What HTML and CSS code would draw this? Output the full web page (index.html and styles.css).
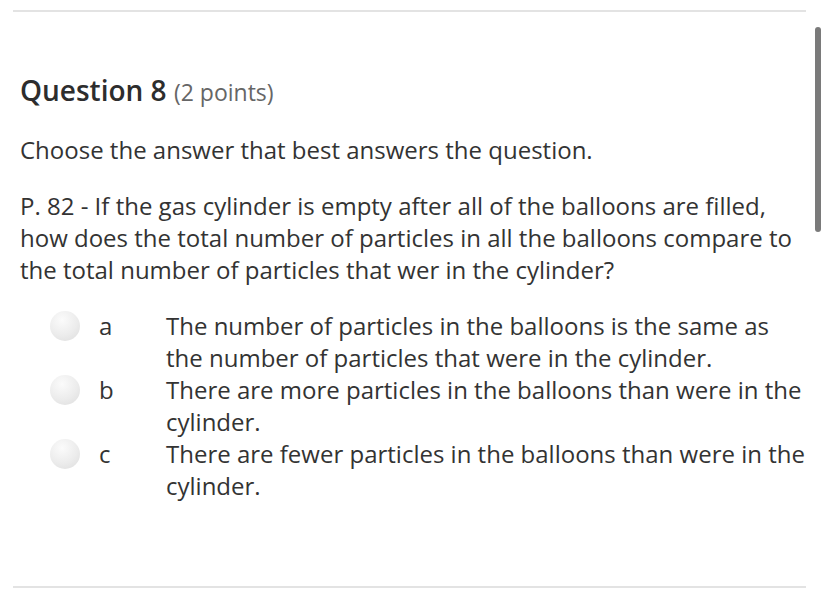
FILE: index.html
```html
<!DOCTYPE html>
<html>
<head>
<meta charset="utf-8">
<link rel="stylesheet" href="styles.css">
</head>
<body>
<div class="page">
  <div class="rule"></div>
  <div class="question">
    <h2 class="title">Question 8 <span class="points">(2 points)</span></h2>
    <p class="text first">Choose the answer that best answers the question.</p>
    <p class="text">P. 82 - If the gas cylinder is empty after all of the balloons are filled, how does the total number of particles in all the balloons compare to the total number of particles that wer in the cylinder?</p>
    <div class="options">
      <div class="option">
        <span class="radio"></span>
        <span class="letter">a</span>
        <span class="answer">The number of particles in the balloons is the same as the number of particles that were in the cylinder.</span>
      </div>
      <div class="option">
        <span class="radio"></span>
        <span class="letter">b</span>
        <span class="answer">There are more particles in the balloons than were in the cylinder.</span>
      </div>
      <div class="option">
        <span class="radio"></span>
        <span class="letter">c</span>
        <span class="answer">There are fewer particles in the balloons than were in the cylinder.</span>
      </div>
    </div>
  </div>
  <div class="rule bottom"></div>
</div>
<div class="scrollbar"></div>
</body>
</html>
```
FILE: styles.css
```css
html, body {
  margin: 0;
  padding: 0;
  background: #fff;
}
body {
  font-family: "Open Sans", "Liberation Sans", sans-serif;
  color: #333;
  width: 826px;
  height: 598px;
  overflow: hidden;
  position: relative;
}
.page {
  padding: 10px 20px 0 13px;
}
.rule {
  height: 2px;
  background: #e3e3e3;
  width: 793px;
}
.rule.bottom {
  margin-top: 84px;
}
.question {
  padding-left: 7px;
  padding-top: 60px;
}
.title {
  margin: 0;
  font-size: 28px;
  font-weight: 600;
  line-height: 36px;
  color: #2d2d2d;
}
.points {
  font-size: 23px;
  font-weight: 400;
  color: #666;
}
.text {
  margin: 24px 0 0;
  font-size: 24px;
  line-height: 32px;
  width: 786px;
}
.text.first {
  margin-top: 24px;
}
.options {
  margin-top: 24px;
  display: flex;
  flex-direction: column;
}
.option {
  display: grid;
  grid-template-columns: 79px 67px 640px;
  font-size: 24px;
  line-height: 32px;
}
.radio {
  width: 30px;
  height: 30px;
  border-radius: 50%;
  background: radial-gradient(circle at 40% 30%, #fbfbfb 0%, #ececec 55%, #dcdcdc 100%);
  margin: 1px 0 0 30px;
}
.letter {
  padding-left: 0;
}
.answer {
  display: block;
}
.scrollbar {
  position: absolute;
  left: 815px;
  top: 27px;
  width: 6px;
  height: 205px;
  border-radius: 3px;
  background: #7a7a7a;
}
```
